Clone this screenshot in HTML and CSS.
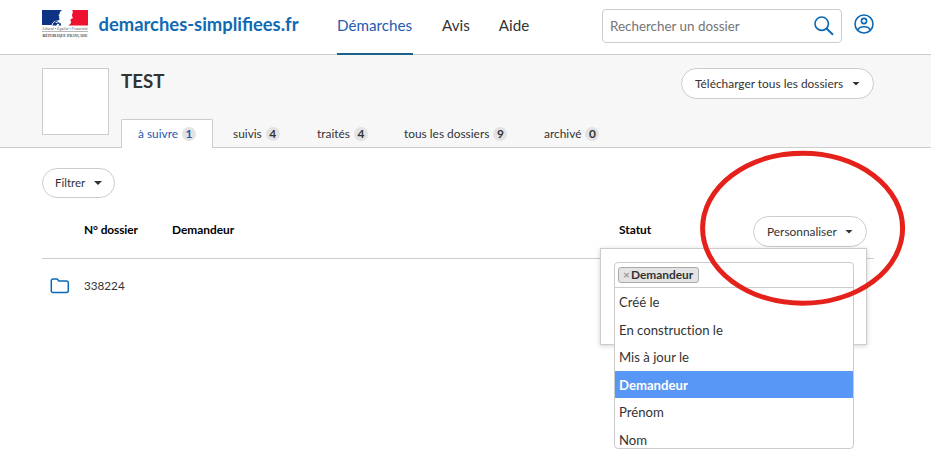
FILE: index.html
```html
<!DOCTYPE html>
<html lang="fr">
<head>
<meta charset="utf-8">
<title>demarches-simplifiees.fr</title>
<link rel="stylesheet" href="styles.css">
</head>
<body>
<header class="header">
  <div class="container header-inner">
    <svg class="marianne" viewBox="0 0 46 28" width="46" height="28">
      <path fill="#0f3384" d="M0 0h20.500c-1.800.6-2.600 1.800-2.800 3.400l-1.200 2.300.9.800-.4 1.200.5 1-.4 1.500-2.500.4c-2.600.6-4 2-5 4.400H0z"/>
      <path fill="#ee1130" d="M30 0h16v15.500H26.500c2-1.800 3.800-3.200 1.800-5.300.3-1.600 2.700-1.400 2.500-2.700-.7-1-1-2-.6-3.200.5-1.500 1.200-2.900-.2-4.300z"/>
      <path fill="none" stroke="#0f3384" stroke-width=".9" d="M9.500 11.500q3-2.500 6-1.500M11 13.700l3-2.400 5 2.700M13.500 15l2.500-1.800 3 1.800"/>
      <path fill="#0f3384" d="M10 15.500l3-3.500 2.200 1.500-.8 2zM16.500 15.500l1-1.700 2 1.700z"/>
      <text class="motto" x="0.500" y="19.800" textLength="45" lengthAdjust="spacingAndGlyphs">Liberté • Égalité • Fraternité</text>
      <path stroke="#999" stroke-width=".7" d="M0 21.500h46"/>
      <text class="republic" x="0.500" y="26.700" textLength="45" lengthAdjust="spacingAndGlyphs">République Française</text>
    </svg>
    <span class="brand">demarches-simplifiees.fr</span>
    <nav class="nav">
      <a class="nav-link active">Démarches</a>
      <a class="nav-link">Avis</a>
      <a class="nav-link">Aide</a>
    </nav>
    <div class="search">
      <span>Rechercher un dossier</span>
      <svg width="20" height="20" viewBox="0 0 20 20" fill="none" stroke="#0b68b5"><circle cx="7.700" cy="7.700" r="6.700" stroke-width="1.600"/><path stroke-width="1.900" d="M12.500 12.500l6.500 6.300"/></svg>
    </div>
    <svg class="account" width="20" height="20" viewBox="0 0 20 20" fill="none" stroke="#0b68b5" stroke-width="1.600"><circle cx="10" cy="10" r="9"/><circle cx="10" cy="7" r="2.600"/><path d="M3.800 16.200c.8-2.600 3.200-3.400 6.200-3.400s5.400.8 6.200 3.400"/></svg>
  </div>
</header>

<section class="band">
  <div class="container band-inner">
    <div class="logo"></div>
    <div class="procedure">
      <div class="title-row">
        <h1>TEST</h1>
        <button class="pill download">Télécharger tous les dossiers<i class="caret"></i></button>
      </div>
      <div class="tabs">
        <a class="tab active">à suivre<b>1</b></a>
        <a class="tab">suivis<b>4</b></a>
        <a class="tab">traités<b>4</b></a>
        <a class="tab">tous les dossiers<b>9</b></a>
        <a class="tab">archivé<b>0</b></a>
      </div>
    </div>
  </div>
</section>

<main class="container main">
  <button class="pill filter">Filtrer<i class="caret"></i></button>
  <div class="row head">
    <span></span><span class="number">N° dossier</span><span>Demandeur</span><span>Statut</span>
    <div class="customize">
      <button class="pill personalize">Personnaliser<i class="caret"></i></button>
      <div class="dropdown">
        <div class="select">
          <div class="choices"><span class="tag"><i>×</i>Demandeur</span></div>
          <ul class="options">
            <li>Créé le</li>
            <li>En construction le</li>
            <li>Mis à jour le</li>
            <li class="selected">Demandeur</li>
            <li>Prénom</li>
            <li>Nom</li>
          </ul>
        </div>
      </div>
    </div>
  </div>
  <div class="row item">
    <svg class="folder" width="20" height="16" viewBox="0 0 20 16" fill="none" stroke="#0b68b5" stroke-width="1.500" stroke-linejoin="round"><path d="M1.300 2.700q0-1.700 1.700-1.700h3.600q1 0 1.500 1l.5 1h7.900q1.800 0 1.800 1.800v8q0 1.700-1.800 1.700H3q-1.700 0-1.700-1.700z"/></svg>
    <span>338224</span>
  </div>
</main>
<svg class="highlight" width="206" height="156" viewBox="0 0 206 156"><ellipse cx="102.600" cy="78.200" rx="100" ry="75" fill="none" stroke="#e4211a" stroke-width="5"/></svg>
</body>
</html>
```
FILE: styles.css
```css
* { box-sizing: border-box; }
body {
  margin: 0;
  height: 475px;
  overflow: hidden;
  background: #fff;
  color: #333;
  font: 12px/16px Lato, sans-serif;
}
.container { width: 832px; margin-left: 42px; }

.header { height: 55px; border-bottom: 1px solid #ccc; }
.header-inner { display: flex; align-items: flex-start; height: 55px; }
.marianne { flex: none; margin-top: 10px; overflow: visible; }
.motto { font: italic 4px "Liberation Serif", serif; fill: #555; }
.republic { font: small-caps bold 5px "Liberation Serif", serif; fill: #444; }
.brand {
  width: 238.500px;
  margin: 12px 0 0 10.500px;
  color: #0f6ab4;
  font-weight: 700;
  font-size: 18.400px;
  line-height: 24px;
}
.nav { display: flex; gap: 29px; width: 265px; height: 55px; }
.nav-link { height: 55px; padding-top: 13px; font-size: 15.200px; line-height: 24px; }
.nav-link.active { color: #2559b3; border-bottom: 2px solid #1b6288; width: 76px; }
.search {
  display: flex;
  justify-content: space-between;
  width: 240px;
  height: 34px;
  margin-top: 9px;
  padding: 6px 7px;
  border: 1px solid #ccc;
  border-radius: 4px;
  background: #fff;
  color: #757575;
  font-size: 13.400px;
  line-height: 21px;
}
.account { margin: 14px 0 0 12px; }

.band { height: 93px; background: #f7f7f7; border-bottom: 1px solid #ccc; }
.band-inner { display: flex; gap: 12px; height: 93px; }
.logo { width: 67px; height: 67px; margin-top: 13px; border: 1px solid #ccc; background: #fff; }
.procedure { flex: 1; }
.title-row { display: flex; justify-content: space-between; height: 64px; padding-top: 13px; }
h1 { margin: 0; font-size: 18.700px; line-height: 26px; }
.pill {
  display: flex;
  align-items: center;
  justify-content: space-between;
  height: 30px;
  padding: 0 13px;
  border: 1px solid #ccc;
  border-radius: 16px;
  background: #fff;
  color: #333;
  font: 12px/16px Lato, sans-serif;
  white-space: nowrap;
}
.caret {
  width: 8px;
  height: 4px;
  background: #333;
  clip-path: polygon(0 0, 100% 0, 50% 100%);
}
.download { width: 193px; height: 31px; font-size: 11.900px; }
.tabs { display: grid; grid-template-columns: 95px 84px 87px 140px 90px; height: 29px; }
.tab {
  display: flex;
  gap: 4px;
  justify-self: start;
  padding: 6px 16px 0;
  border: 1px solid transparent;
  border-bottom: 0;
  font-size: 11.900px;
  white-space: nowrap;
}
.tab.active {
  width: 92px;
  background: #fff;
  border-color: #ccc;
  border-radius: 2px 2px 0 0;
  color: #2559b3;
}
.tab b {
  width: 14px;
  height: 14px;
  margin-top: 1px;
  border-radius: 50%;
  background: #e3e3e3;
  line-height: 14px;
  text-align: center;
}

.filter { width: 73px; margin-top: 20px; padding: 0 12px; font-size: 11.500px; }
.row { display: grid; grid-template-columns: 42px 88px 447px 134px 114px; }
.head {
  height: 61px;
  padding-top: 18px;
  border-bottom: 1px solid #ccc;
  color: #000;
  font-weight: 700;
  line-height: 28px;
  font-size: 11.900px;
}
.number { letter-spacing: -.1px; }
.customize { position: relative; height: 31px; }
.personalize { width: 114px; height: 31px; margin: 0; font-size: 11.900px; }
.dropdown {
  position: absolute;
  top: 32px;
  right: 0;
  width: 267px;
  height: 97px;
  padding: 13px;
  border: 1px solid #ccc;
  background: #fff;
  color: #333;
  font-weight: 400;
  box-shadow: 0 1px 5px rgba(0, 0, 0, .18);
}
.select {
  width: 240px;
  height: 187px;
  border: 1px solid #ccc;
  border-radius: 4px;
  background: #fff;
  overflow: hidden;
}
.choices { height: 25px; padding: 4px 3px; border-bottom: 1px solid #ccc; }
.tag {
  display: flex;
  align-items: center;
  gap: 2px;
  width: 81px;
  height: 16px;
  padding-left: 4px;
  border: 1px solid #aaa;
  border-radius: 3px;
  background: #e4e4e4;
  font-weight: 700;
  font-size: 11.900px;
  line-height: 14px;
}
.tag i { color: #999; font-style: normal; width: 6px; }
.options { margin: 0; padding: 0; list-style: none; }
.options li {
  height: 27.500px;
  padding: 0 4px;
  font-size: 13.150px;
  line-height: 28px;
  font-variant-ligatures: none;
}
.options .selected { background: #5897f5; color: #fff; font-weight: 700; }
.item { height: 54px; align-items: center; }
.item .folder { margin-left: 8px; }
.item span { margin-top: -1px; font-size: 11.700px; line-height: 15px; }
.highlight { position: absolute; left: 700px; top: 150px; }
```
